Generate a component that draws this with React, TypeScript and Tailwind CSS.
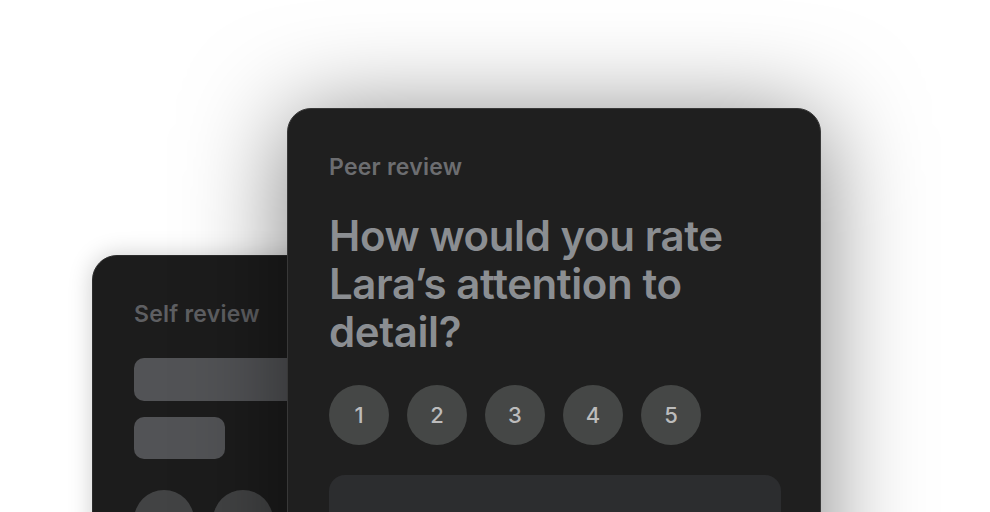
import React from "react";

const font = { fontFamily: "Inter, 'Noto Sans', sans-serif" };

export default function App() {
  return (
    <div className="w-[990px] h-[512px] overflow-hidden bg-white" style={font}>
      <div className="flex items-start pl-[92px] pt-[108px]">
        <div className="relative z-0 mt-[147px] w-[300px] h-[400px] shrink-0 rounded-[25px] border border-[#2c2c2c] bg-[#1c1c1c] shadow-[0_0_24px_rgba(0,0,0,0.2)] px-[41px] pt-[44px]">
          <div className="text-[23px] leading-[28px] font-semibold tracking-[0.01em] text-[#5e5f62]">Self review</div>
          <div className="mt-[30px] h-[43px] w-[400px] rounded-[10px] bg-[#525356]"></div>
          <div className="mt-[16px] h-[42px] w-[91px] rounded-[10px] bg-[#525356]"></div>
          <div className="mt-[31px] flex gap-[19px]">
            {[1, 2, 3].map((n) => (
              <div key={n} className="flex h-[60px] w-[60px] shrink-0 items-center justify-center rounded-full bg-[#424344] text-[22px] font-medium text-[#9a9a9a]">
                {n}
              </div>
            ))}
          </div>
        </div>
        <div className="relative z-10 ml-[-105px] w-[534px] h-[600px] shrink-0 rounded-[24px] border-[1.5px] border-[#383838] bg-[#1f1f1f] shadow-[0_10px_100px_rgba(0,0,0,0.5)] px-[41px] pt-[44px]">
          <div className="text-[23px] leading-[28px] font-semibold tracking-[0.01em] text-[#6c6d70]">Peer review</div>
          <div className="mt-[31px] text-[42px] leading-[48px] font-semibold tracking-[-0.01em] text-[#8b8e92]">
            How would you rate
            <br />
            Lara’s attention to
            <br />
            detail?
          </div>
          <div className="mt-[29px] flex gap-[18px]">
            {[1, 2, 3, 4, 5].map((n) => (
              <div key={n} className="flex h-[60px] w-[60px] shrink-0 items-center justify-center rounded-full bg-[#454746] text-[22px] font-medium text-[#bcbcbc]">
                {n}
              </div>
            ))}
          </div>
          <div className="mt-[30px] h-[120px] w-[452px] rounded-[16px] bg-[#2c2d2f]"></div>
        </div>
      </div>
    </div>
  );
}
